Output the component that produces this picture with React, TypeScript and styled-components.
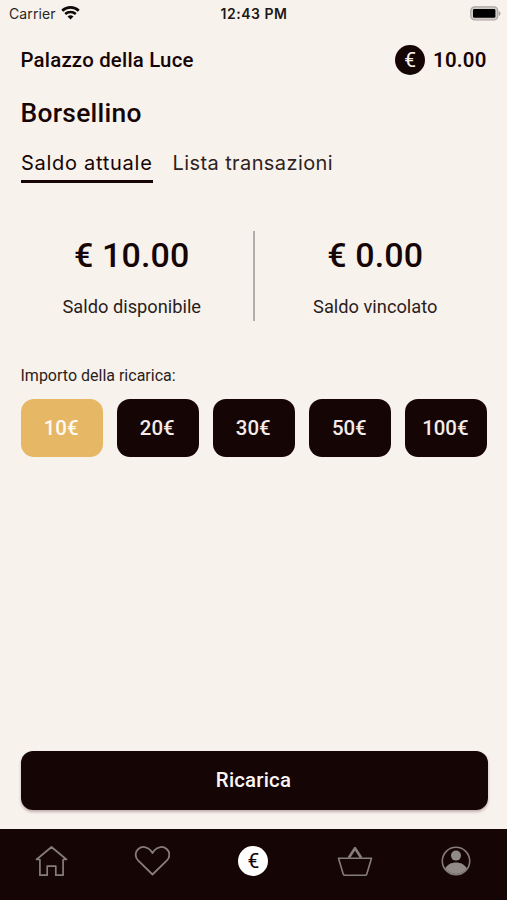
import React, { useState } from "react";
import styled, { createGlobalStyle } from "styled-components";

const ink = "#160505";
const cream = "#f8f2ed";
const muted = "#857d7b";

const GlobalStyle = createGlobalStyle`
  * { box-sizing: border-box; }
  body { margin: 0; background: ${cream}; }
  button { font: inherit; border: 0; padding: 0; background: none; cursor: pointer; }
`;

const Screen = styled.div`
  display: flex;
  flex-direction: column;
  width: 100%;
  height: 900px;
  overflow: hidden;
  background: ${cream};
  color: ${ink};
  font-family: Roboto, sans-serif;
`;

const StatusBar = styled.header`
  display: grid;
  grid-template-columns: 1fr auto 1fr;
  align-items: center;
  height: 26px;
  padding: 0 6px 0 9px;
  font-family: Inter, sans-serif;
  font-size: 14px;
`;

const Carrier = styled.div`
  display: flex;
  align-items: center;
  gap: 5px;
  letter-spacing: 0.1px;
  color: #2a2624;
`;

const Clock = styled.div`
  font-weight: 600;
  letter-spacing: 0.5px;
  margin-right: 2px;
  color: #1d1816;
`;

const BatterySlot = styled.div`
  display: flex;
  justify-content: flex-end;
`;

const TopBar = styled.div`
  display: flex;
  align-items: center;
  justify-content: space-between;
  height: 67px;
  padding: 0 20.5px 0 20.5px;
  font-size: 20.4px;
  font-weight: 500;
  letter-spacing: 0.2px;
`;

const Wallet = styled.div`
  display: flex;
  align-items: center;
  gap: 8px;
  font-weight: 600;
`;

const Title = styled.h1`
  margin: 3px 0 0;
  padding: 0 20.5px;
  font-size: 26.4px;
  line-height: 34px;
  font-weight: 500;
  letter-spacing: 0.28px;
`;

const Tabs = styled.nav`
  display: flex;
  gap: 20px;
  margin-top: 18.5px;
  padding: 0 21px;
`;

const Tab = styled.button<{ $active: boolean }>`
  height: 34px;
  padding: 0 0 3px;
  display: flex;
  align-items: center;
  font-family: Inter, sans-serif;
  font-size: 20px;
  letter-spacing: ${({ $active }) => ($active ? "0.72px" : "0.4px")};
  color: ${({ $active }) => ($active ? ink : "#2e2220")};
  border-bottom: 3px solid ${({ $active }) => ($active ? ink : "transparent")};
`;

const Balances = styled.section`
  display: grid;
  grid-template-columns: 1fr 2px 1fr;
  height: 90px;
  margin-top: 48.5px;
  padding: 0 11px 0 11px;
`;

const Divider = styled.div`
  background: #b3adaa;
`;

const Balance = styled.div`
  display: flex;
  flex-direction: column;
  align-items: center;
`;

const Amount = styled.div`
  font-size: 34px;
  line-height: 40px;
  font-weight: 500;
  letter-spacing: 0.15px;
  margin-top: 4px;
`;

const Caption = styled.div`
  margin-top: 20px;
  font-size: 18.25px;
  line-height: 24px;
  color: #2a1d1b;
`;

const TopUp = styled.section`
  padding: 0 19.5px 0 20.5px;
  margin-top: 43px;
`;

const TopUpLabel = styled.div`
  font-size: 16px;
  line-height: 24px;
  color: #2a1d1b;
`;

const AmountGrid = styled.div`
  display: grid;
  grid-template-columns: repeat(5, 1fr);
  gap: 13.2px;
  margin-top: 10.6px;
`;

const AmountButton = styled.button<{ $selected: boolean }>`
  height: 58.6px;
  border-radius: 13px;
  background: ${({ $selected }) => ($selected ? "#e6b865" : ink)};
  color: ${({ $selected }) => ($selected ? "#fffaf2" : "#f3ebe8")};
  font-size: 20.4px;
  font-weight: 500;
  padding-right: 1.5px;
`;

const Footer = styled.div`
  margin-top: auto;
  padding: 0 19.5px 19.5px 20.5px;
`;

const PrimaryButton = styled.button`
  width: 100%;
  height: 58.5px;
  border-radius: 12px;
  background: ${ink};
  color: #fbf6f3;
  font-size: 20.4px;
  font-weight: 500;
  letter-spacing: 0.2px;
  padding-right: 1px;
  box-shadow: 0 2px 3px rgba(60, 20, 20, 0.3);
`;

const BottomNav = styled.nav`
  display: grid;
  grid-template-columns: repeat(5, 1fr);
  height: 71px;
  padding-top: 12px;
  background: ${ink};
`;

const NavItem = styled.button`
  display: flex;
  justify-content: center;
  align-items: center;
  height: 40px;
`;

const Coin = styled.span<{ $inverted?: boolean }>`
  display: flex;
  align-items: center;
  justify-content: center;
  width: 30px;
  height: 30px;
  border-radius: 50%;
  background: ${({ $inverted }) => ($inverted ? "#ffffff" : ink)};
  color: ${({ $inverted }) => ($inverted ? ink : cream)};
  font-size: 21px;
  font-weight: 400;
  letter-spacing: 0;
  line-height: 30px;
`;

const WifiIcon = () => (
  <svg width="19" height="14" viewBox="0 0 19 14" fill="none" stroke="#0d0a09">
    <path d="M1.2 4.7a12.2 12.2 0 0 1 16.6 0" strokeWidth="2.7" />
    <path d="M4.2 8a7.8 7.8 0 0 1 10.6 0" strokeWidth="2.5" />
    <path d="M9.5 13.6 6.5 10.5a4.5 4.5 0 0 1 6 0Z" fill="#0d0a09" stroke="none" />
  </svg>
);

const BatteryIcon = () => (
  <svg width="31" height="15" viewBox="0 0 31 15">
    <rect x="0.8" y="0.8" width="27" height="13.2" rx="4" fill="#d2ccc8" stroke="#aaa5a2" strokeWidth="1.2" />
    <rect x="3" y="3" width="22.4" height="8.8" rx="1.4" fill="#000" />
    <path d="M28.8 5c2.3.7 2.3 4.3 0 5z" fill="#aaa5a2" />
  </svg>
);

const HomeIcon = () => (
  <svg width="34" height="32" viewBox="0 0 34 32" fill="none" stroke={muted} strokeWidth="1.7" strokeLinejoin="round">
    <path d="M17.5 2 2.5 14.5H5.9V30.2h7.3v-9h8.6v9h7.3V14.5H32.5Z" />
  </svg>
);

const HeartIcon = () => (
  <svg width="36" height="32" viewBox="0 0 36 32" fill="none" stroke={muted} strokeWidth="1.8" strokeLinejoin="round">
    <path d="M18.5 29.5 4.3 15.7C.7 12 .8 7 4.3 4 8 .8 13.500 1.500 16.500 5.300L18.5 8l2-2.700C23.500 1.500 29 .8 32.700 4c3.500 3 3.600 8 0 11.700Z" />
  </svg>
);

const BasketIcon = () => (
  <svg width="36" height="32" viewBox="0 0 36 32" fill="none" stroke={muted} strokeWidth="1.6" strokeLinejoin="round">
    <path d="M1.5 13.2h33l-4.7 15.700q-.4 1.300-1.800 1.300H8q-1.400 0-1.800-1.300Z" />
    <path d="m11.8 12.7 6.2-9.500 6.200 9.500" strokeWidth="2.6" />
  </svg>
);

const ProfileIcon = () => (
  <svg width="30" height="30" viewBox="0 0 30 30">
    <circle cx="15" cy="15" r="13.7" fill="none" stroke={muted} strokeWidth="1.6" />
    <circle cx="15" cy="9.6" r="5" fill="#918b88" />
    <path d="M4.200 22.500C6 18.600 10.200 16.500 15 16.500S24 18.600 25.800 22.500A13.500 13.500 0 0 1 4.200 22.500Z" fill="#918b88" />
  </svg>
);

const amounts = [10, 20, 30, 50, 100];
const tabs = ["Saldo attuale", "Lista transazioni"];

export default function App() {
  const [selected, setSelected] = useState(10);
  const [tab, setTab] = useState(0);

  return (
    <Screen>
      <GlobalStyle />
      <StatusBar>
        <Carrier>
          Carrier
          <WifiIcon />
        </Carrier>
        <Clock>12:43 PM</Clock>
        <BatterySlot>
          <BatteryIcon />
        </BatterySlot>
      </StatusBar>
      <TopBar>
        <span>Palazzo della Luce</span>
        <Wallet>
          <Coin>€</Coin>
          10.00
        </Wallet>
      </TopBar>
      <Title>Borsellino</Title>
      <Tabs>
        {tabs.map((label, i) => (
          <Tab key={label} $active={tab === i} onClick={() => setTab(i)}>
            {label}
          </Tab>
        ))}
      </Tabs>
      <Balances>
        <Balance>
          <Amount>€ 10.00</Amount>
          <Caption>Saldo disponibile</Caption>
        </Balance>
        <Divider />
        <Balance>
          <Amount>€ 0.00</Amount>
          <Caption>Saldo vincolato</Caption>
        </Balance>
      </Balances>
      <TopUp>
        <TopUpLabel>Importo della ricarica:</TopUpLabel>
        <AmountGrid>
          {amounts.map((value) => (
            <AmountButton key={value} $selected={selected === value} onClick={() => setSelected(value)}>
              {value}€
            </AmountButton>
          ))}
        </AmountGrid>
      </TopUp>
      <Footer>
        <PrimaryButton>Ricarica</PrimaryButton>
      </Footer>
      <BottomNav>
        <NavItem aria-label="Home"><HomeIcon /></NavItem>
        <NavItem aria-label="Preferiti"><HeartIcon /></NavItem>
        <NavItem aria-label="Borsellino"><Coin $inverted>€</Coin></NavItem>
        <NavItem aria-label="Carrello"><BasketIcon /></NavItem>
        <NavItem aria-label="Profilo"><ProfileIcon /></NavItem>
      </BottomNav>
    </Screen>
  );
}
